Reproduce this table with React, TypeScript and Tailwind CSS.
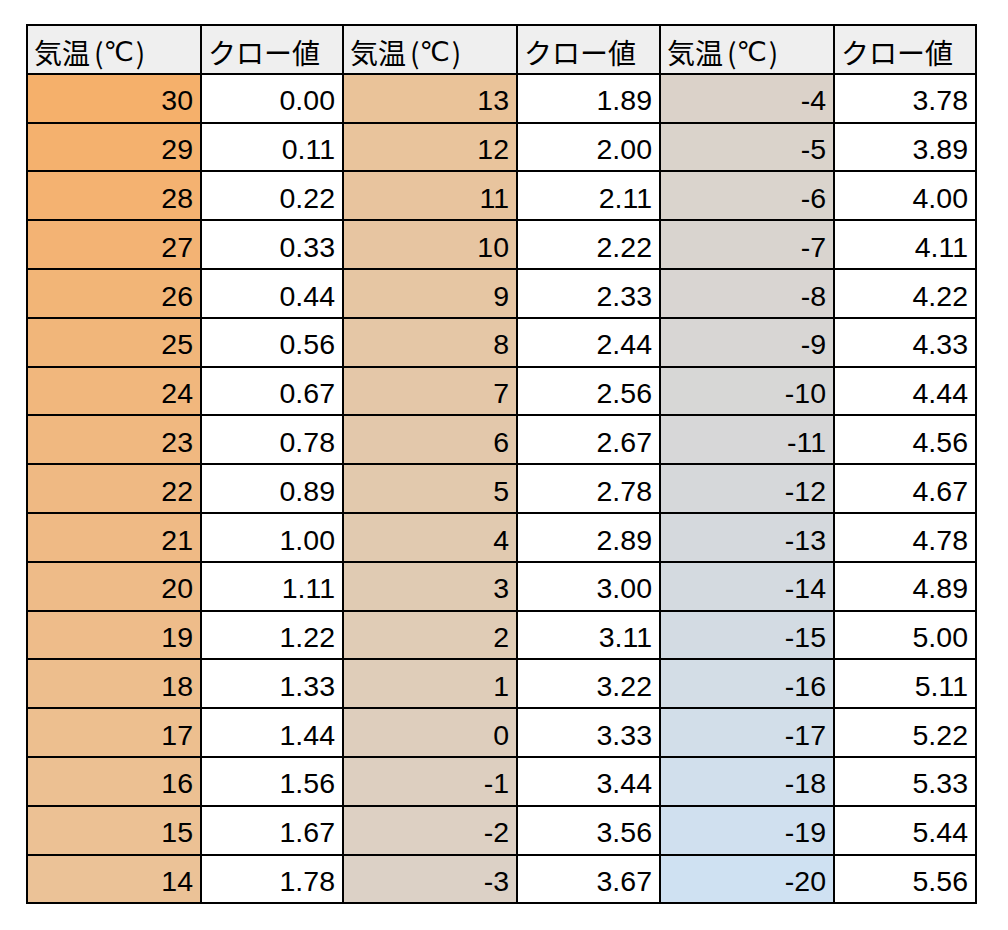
import React from "react";

type RGB = [number, number, number];

const anchors: [number, RGB][] = [
  [30, [245, 176, 107]],
  [23, [240, 184, 128]],
  [14, [235, 194, 151]],
  [5, [226, 201, 173]],
  [-4, [219, 210, 201]],
  [-12, [214, 216, 218]],
  [-20, [207, 225, 242]],
];

function colorFor(t: number): string {
  for (let i = 0; i < anchors.length - 1; i++) {
    const [t0, c0] = anchors[i];
    const [t1, c1] = anchors[i + 1];
    if (t <= t0 && t >= t1) {
      const f = (t0 - t) / (t0 - t1);
      const c = c0.map((v, k) => Math.round(v + (c1[k] - v) * f));
      return `rgb(${c[0]}, ${c[1]}, ${c[2]})`;
    }
  }
  return "white";
}

const clo = (t: number) => ((30 - t) / 9).toFixed(2);

function TempHeader() {
  return (
    <div className="flex items-center bg-[#efefef] pl-[6px] pt-[5px] font-['Noto_Sans_CJK_JP','Noto_Sans',sans-serif] text-[28px] leading-normal">
      気温<span className="ml-[4px]">(</span>
      <span className="font-['DejaVu_Sans',sans-serif] text-[27px] tracking-[-1px]">℃</span>
      <span className="ml-[3px]">)</span>
    </div>
  );
}

function CloHeader() {
  return (
    <div className="flex items-center bg-[#efefef] pl-[6px] pt-[5px] font-['Noto_Sans_CJK_JP','Noto_Sans',sans-serif] text-[28px] leading-normal">
      クロー値
    </div>
  );
}

export default function App() {
  const rows = Array.from({ length: 17 }, (_, i) => [30 - i, 13 - i, -4 - i]);

  return (
    <div className="h-[930px] w-[1008px] bg-white pl-[26px] pt-[24px]">
      <div className="grid w-fit auto-rows-[46.8px] grid-cols-[172px_140px_172px_141px_172px_140px] gap-[2px] bg-black p-[2px] font-['Liberation_Sans',Arial,sans-serif] text-black">
        <TempHeader />
        <CloHeader />
        <TempHeader />
        <CloHeader />
        <TempHeader />
        <CloHeader />
        {rows.map((r, ri) => (
          <React.Fragment key={ri}>
            {r.map((t, ci) => (
              <React.Fragment key={ci}>
                <div
                  className="flex items-center justify-end pr-[7px] pt-[5px] text-[28.5px] leading-normal"
                  style={{ backgroundColor: colorFor(t) }}
                >
                  {t}
                </div>
                <div className="flex items-center justify-end bg-white pr-[7px] pt-[5px] text-[28.5px] leading-normal">
                  {clo(t)}
                </div>
              </React.Fragment>
            ))}
          </React.Fragment>
        ))}
      </div>
    </div>
  );
}
